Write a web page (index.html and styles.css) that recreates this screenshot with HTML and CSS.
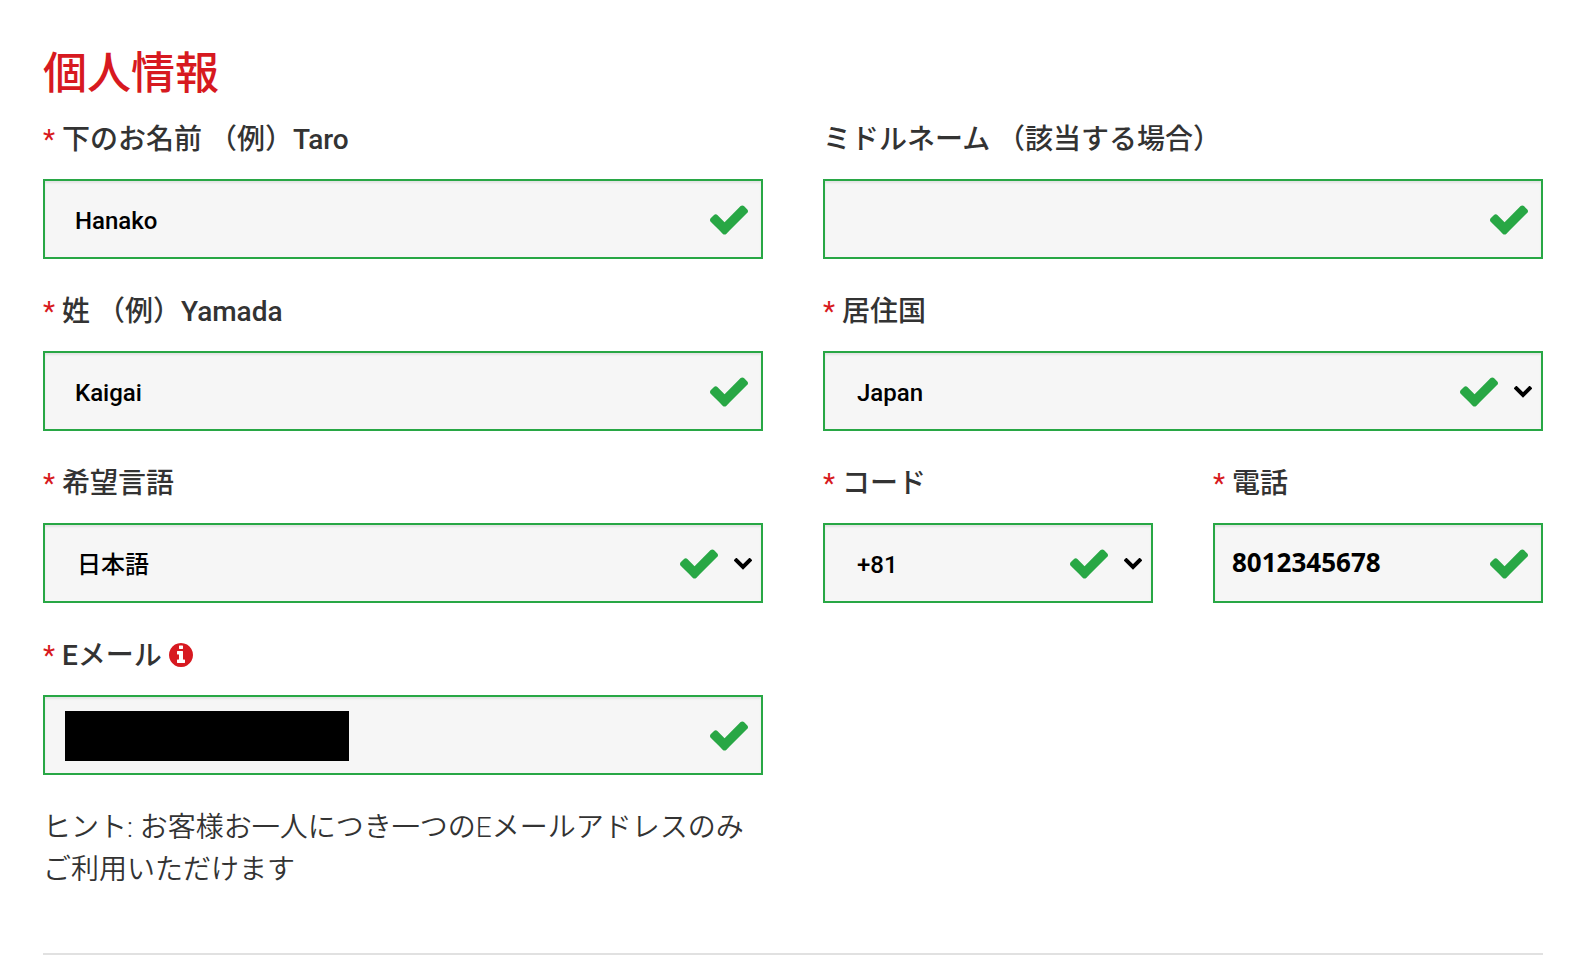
FILE: index.html
```
<!DOCTYPE html>
<html lang="ja">
<head>
<meta charset="utf-8">
<meta name="viewport" content="width=device-width, initial-scale=1">
<title>個人情報</title>
<link rel="stylesheet" href="styles.css">
</head>
<body>
<svg class="sprite" aria-hidden="true">
  <symbol id="check" viewBox="121 334 1550 1188"><path d="M1671 566q0 40-28 68l-724 724-136 136q-28 28-68 28t-68-28l-136-136-362-362q-28-28-28-68t28-68l136-136q28-28 68-28t68 28l294 295 656-657q28-28 68-28t68 28l136 136q28 28 28 68z"/></symbol>
  <symbol id="chevron" viewBox="0 0 18 12"><path d="M1 1l8 8 8-8" fill="none" stroke="currentColor" stroke-width="4"/></symbol>
  <symbol id="info" viewBox="128 128 1536 1536"><path d="M1152 1376v-160q0-14-9-23t-23-9h-96v-512q0-14-9-23t-23-9h-320q-14 0-23 9t-9 23v160q0 14 9 23t23 9h96v320h-96q-14 0-23 9t-9 23v160q0 14 9 23t23 9h448q14 0 23-9t9-23zm-128-896v-160q0-14-9-23t-23-9h-192q-14 0-23 9t-9 23v160q0 14 9 23t23 9h192q14 0 23-9t9-23zm640 416q0 209-103 385.500t-279.500 279.500-385.500 103-385.500-103-279.500-279.500-103-385.500 103-385.500 279.500-279.500 385.500-103 385.500 103 279.500 279.500 103 385.500z"/></symbol>
</svg>
<form class="personal">
  <h1 class="title">個人情報</h1>
  <div class="grid">
    <div class="group half">
      <label class="label" for="first"><span class="req">*</span> 下のお名前 （例）Taro</label>
      <div class="field">
        <input class="control" id="first" type="text" value="Hanako">
        <svg class="check"><use href="#check"/></svg>
      </div>
    </div>
    <div class="group half">
      <label class="label" for="middle">ミドルネーム （該当する場合）</label>
      <div class="field">
        <input class="control" id="middle" type="text">
        <svg class="check"><use href="#check"/></svg>
      </div>
    </div>
    <div class="group half">
      <label class="label" for="last"><span class="req">*</span> 姓 （例）Yamada</label>
      <div class="field">
        <input class="control" id="last" type="text" value="Kaigai">
        <svg class="check"><use href="#check"/></svg>
      </div>
    </div>
    <div class="group half">
      <label class="label" for="country"><span class="req">*</span> 居住国</label>
      <div class="field field-select">
        <select class="control" id="country"><option>Japan</option></select>
        <svg class="check"><use href="#check"/></svg>
        <svg class="chevron"><use href="#chevron"/></svg>
      </div>
    </div>
    <div class="group half">
      <label class="label" for="language"><span class="req">*</span> 希望言語</label>
      <div class="field field-select">
        <select class="control" id="language"><option>日本語</option></select>
        <svg class="check"><use href="#check"/></svg>
        <svg class="chevron"><use href="#chevron"/></svg>
      </div>
    </div>
    <div class="group">
      <label class="label" for="code"><span class="req">*</span> コード</label>
      <div class="field field-select">
        <select class="control" id="code"><option>+81</option></select>
        <svg class="check"><use href="#check"/></svg>
        <svg class="chevron"><use href="#chevron"/></svg>
      </div>
    </div>
    <div class="group">
      <label class="label" for="phone"><span class="req">*</span> 電話</label>
      <div class="field">
        <input class="control phone" id="phone" type="tel" value="8012345678">
        <svg class="check"><use href="#check"/></svg>
      </div>
    </div>
    <div class="group half">
      <label class="label" for="email"><span class="req">*</span> Eメール <svg class="info"><use href="#info"/></svg></label>
      <div class="field">
        <input class="control" id="email" type="email" aria-describedby="email-hint">
        <span class="mask"></span>
        <svg class="check"><use href="#check"/></svg>
      </div>
      <p class="hint" id="email-hint">ヒント: お客様お一人につき一つのEメールアドレスのみご利用いただけます</p>
    </div>
  </div>
  <hr class="rule">
</form>
</body>
</html>
```
FILE: styles.css
```
* {
  box-sizing: border-box;
}

body {
  margin: 0;
  background: #fff;
  color: #333;
  font-family: Roboto, "Noto Sans CJK JP", sans-serif;
  font-size: 28px;
  line-height: 42px;
}

.sprite {
  display: none;
}

.personal {
  padding: 44px 39px 0 43px;
}

.title {
  margin: 0 0 15px;
  color: #d71920;
  font-size: 44px;
  font-weight: 500;
  line-height: 60px;
}

.grid {
  display: grid;
  grid-template-columns: repeat(4, minmax(0, 1fr));
  gap: 32px 60px;
}

.half {
  grid-column: span 2;
}

.label {
  display: block;
  height: 42px;
  margin-bottom: 18px;
  font-weight: 500;
  white-space: nowrap;
}

.req {
  color: #d71920;
  font-weight: 400;
}

.info {
  width: 24px;
  height: 24px;
  fill: #d71920;
  vertical-align: -2px;
}

.field {
  position: relative;
}

.control {
  display: block;
  width: 100%;
  height: 80px;
  margin: 0;
  padding: 4px 60px 0 30px;
  border: 2px solid #28a745;
  border-radius: 0;
  outline: 0;
  appearance: none;
  background: #f6f6f6;
  box-shadow: inset 0 2px 2px rgba(0, 0, 0, 0.075);
  color: #000;
  font-family: inherit;
  font-size: 24px;
  font-weight: 500;
}

.field-select .control {
  padding: 4px 90px 0 32px;
}

.phone {
  padding: 0 60px 2px 17px;
  font-family: "Open Sans", sans-serif;
  font-size: 26px;
  font-weight: 700;
}

.check {
  position: absolute;
  top: 26px;
  right: 15px;
  width: 38px;
  height: 30px;
  fill: #28a745;
  pointer-events: none;
}

.field-select .check {
  right: 45px;
}

.chevron {
  position: absolute;
  top: 35px;
  right: 11px;
  width: 18px;
  height: 12px;
  overflow: visible;
  color: #000;
  pointer-events: none;
}

.mask {
  position: absolute;
  top: 16px;
  left: 22px;
  width: 284px;
  height: 50px;
  background: #000;
}

.hint {
  margin: 32px 0 0;
  font-weight: 350;
}

.rule {
  margin: 62px 0 0;
  border: 0;
  border-top: 2px solid #e1e1e1;
}
```
